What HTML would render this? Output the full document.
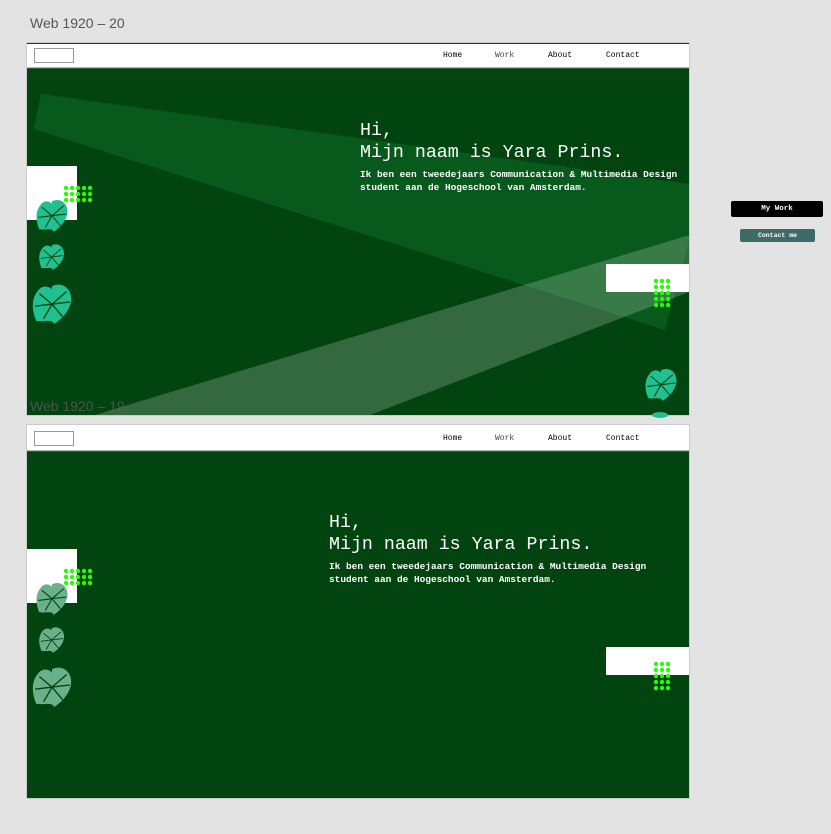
<!DOCTYPE html>
<html><head><style>
body{margin:0;width:831px;height:834px;background:#e3e3e3;position:relative;overflow:hidden;font-family:"Liberation Sans",sans-serif}
.lbl{position:absolute;left:30px;font-size:14px;color:#555}
.txt{position:absolute;font-family:"Liberation Mono",monospace;color:#fff}
.h{font-size:18.3px;line-height:22px;margin:0}
.p{font-size:9.45px;font-weight:bold;line-height:13px;margin-top:4px}
.nav{position:absolute;font-family:"Liberation Mono",monospace;font-size:8px;color:#000}
.btn{position:absolute;font-family:"Liberation Mono",monospace;font-weight:bold;color:#fff;text-align:center;border-radius:2px}
</style></head><body>
<div class="lbl" style="top:15px">Web 1920 – 20</div>
<svg width="831" height="834" style="position:absolute;left:0;top:0">
<defs>
<g id="leaf"><path d="M20 5 C30 0 40 8 38 20 C36 30 28 37 22 41 C20 36 14 39 5 38 C1 28 0 18 6 10 C10 4 16 4 20 8 Z"/>
<path d="M20 22 L34 10 M20 22 L37 20 M20 22 L30 34 M20 22 L8 12 M20 22 L4 24 M20 22 L12 36" stroke="#02440f" stroke-width="1.3" fill="none"/></g>
<g id="dots" fill="#22ff00"><circle cx="0" cy="0" r="2.2"/><circle cx="6" cy="0" r="2.2"/><circle cx="12" cy="0" r="2.2"/><circle cx="18" cy="0" r="2.2"/><circle cx="24" cy="0" r="2.2"/><circle cx="0" cy="6" r="2.2"/><circle cx="6" cy="6" r="2.2"/><circle cx="12" cy="6" r="2.2"/><circle cx="18" cy="6" r="2.2"/><circle cx="24" cy="6" r="2.2"/><circle cx="0" cy="12" r="2.2"/><circle cx="6" cy="12" r="2.2"/><circle cx="12" cy="12" r="2.2"/><circle cx="18" cy="12" r="2.2"/><circle cx="24" cy="12" r="2.2"/></g>
<g id="vdots" fill="#22ff00"><circle cx="0" cy="0" r="2.2"/><circle cx="6" cy="0" r="2.2"/><circle cx="12" cy="0" r="2.2"/><circle cx="0" cy="6" r="2.2"/><circle cx="6" cy="6" r="2.2"/><circle cx="12" cy="6" r="2.2"/><circle cx="0" cy="12" r="2.2"/><circle cx="6" cy="12" r="2.2"/><circle cx="12" cy="12" r="2.2"/><circle cx="0" cy="18" r="2.2"/><circle cx="6" cy="18" r="2.2"/><circle cx="12" cy="18" r="2.2"/><circle cx="0" cy="24" r="2.2"/><circle cx="6" cy="24" r="2.2"/><circle cx="12" cy="24" r="2.2"/></g>
<clipPath id="c1"><rect x="27" y="68" width="662" height="347"/></clipPath>
</defs>
<rect x="26.5" y="42.5" width="663" height="373" fill="#fff" stroke="#ccc"/>
<rect x="27" y="43" width="662" height="1" fill="#02440f"/>
<rect x="27" y="68" width="662" height="347" fill="#02440f"/>
<rect x="27" y="67.5" width="662" height="1" fill="#5a7a60"/>
<rect x="34.5" y="48.5" width="39" height="14" fill="#fff" stroke="#999"/>
<g clip-path="url(#c1)">
<polygon points="41,94 689,184 689,240 665,330 34,129" fill="#075a1c"/>
<polygon points="95,415 686,236 689,236 689,292 370,415" fill="rgba(255,255,255,0.2)"/>
</g>
<rect x="27" y="166" width="50" height="54" fill="#fff"/>
<use href="#dots" x="66" y="188"/>
<g fill="#20c090">
<use href="#leaf" transform="translate(35,197) scale(0.85)"/>
<use href="#leaf" transform="translate(38,242) scale(0.68)"/>
<use href="#leaf" transform="translate(31,281) scale(1.05)"/>
<use href="#leaf" transform="translate(644,366) scale(0.85)"/>
<ellipse cx="660" cy="415" rx="8" ry="3"/>
</g>
<rect x="606" y="264" width="83" height="28" fill="#fff"/>
<use href="#vdots" x="656" y="281"/>
<rect x="26.5" y="424.5" width="663" height="374" fill="#fff" stroke="#ccc"/>
<rect x="27" y="451" width="662" height="347" fill="#02440f"/>
<rect x="27" y="450.5" width="662" height="1" fill="#5a7a60"/>
<rect x="34.5" y="431.5" width="39" height="14" fill="#fff" stroke="#999"/>
<rect x="27" y="549" width="50" height="54" fill="#fff"/>
<use href="#dots" x="66" y="571"/>
<g fill="#6ab08a">
<use href="#leaf" transform="translate(35,580) scale(0.85)"/>
<use href="#leaf" transform="translate(38,625) scale(0.68)"/>
<use href="#leaf" transform="translate(31,664) scale(1.05)"/>
</g>
<rect x="606" y="647" width="83" height="28" fill="#fff"/>
<use href="#vdots" x="656" y="664"/>
</svg>
<div class="lbl" style="top:398px;color:rgba(90,90,90,0.8)">Web 1920 – 19</div>
<div class="nav" style="left:443px;top:51px">Home</div><div class="nav" style="left:495px;top:51px;color:#444">Work</div><div class="nav" style="left:548px;top:51px">About</div><div class="nav" style="left:606px;top:51px">Contact</div>
<div class="nav" style="left:443px;top:434px">Home</div><div class="nav" style="left:495px;top:434px;color:#444">Work</div><div class="nav" style="left:548px;top:434px">About</div><div class="nav" style="left:606px;top:434px">Contact</div>
<div class="txt" style="left:360px;top:120px"><div class="h">Hi,<br>Mijn naam is Yara Prins.</div><div class="p">Ik ben een tweedejaars Communication &amp; Multimedia Design<br>student aan de Hogeschool van Amsterdam.</div></div>
<div class="txt" style="left:329px;top:512px"><div class="h">Hi,<br>Mijn naam is Yara Prins.</div><div class="p">Ik ben een tweedejaars Communication &amp; Multimedia Design<br>student aan de Hogeschool van Amsterdam.</div></div>
<div class="btn" style="left:731px;top:201px;width:92px;height:16px;line-height:16px;background:#000;font-size:7.5px">My Work</div>
<div class="btn" style="left:740px;top:229px;width:75px;height:13px;line-height:13px;background:#3d6b68;font-size:6.5px">Contact me</div>
</body></html>
